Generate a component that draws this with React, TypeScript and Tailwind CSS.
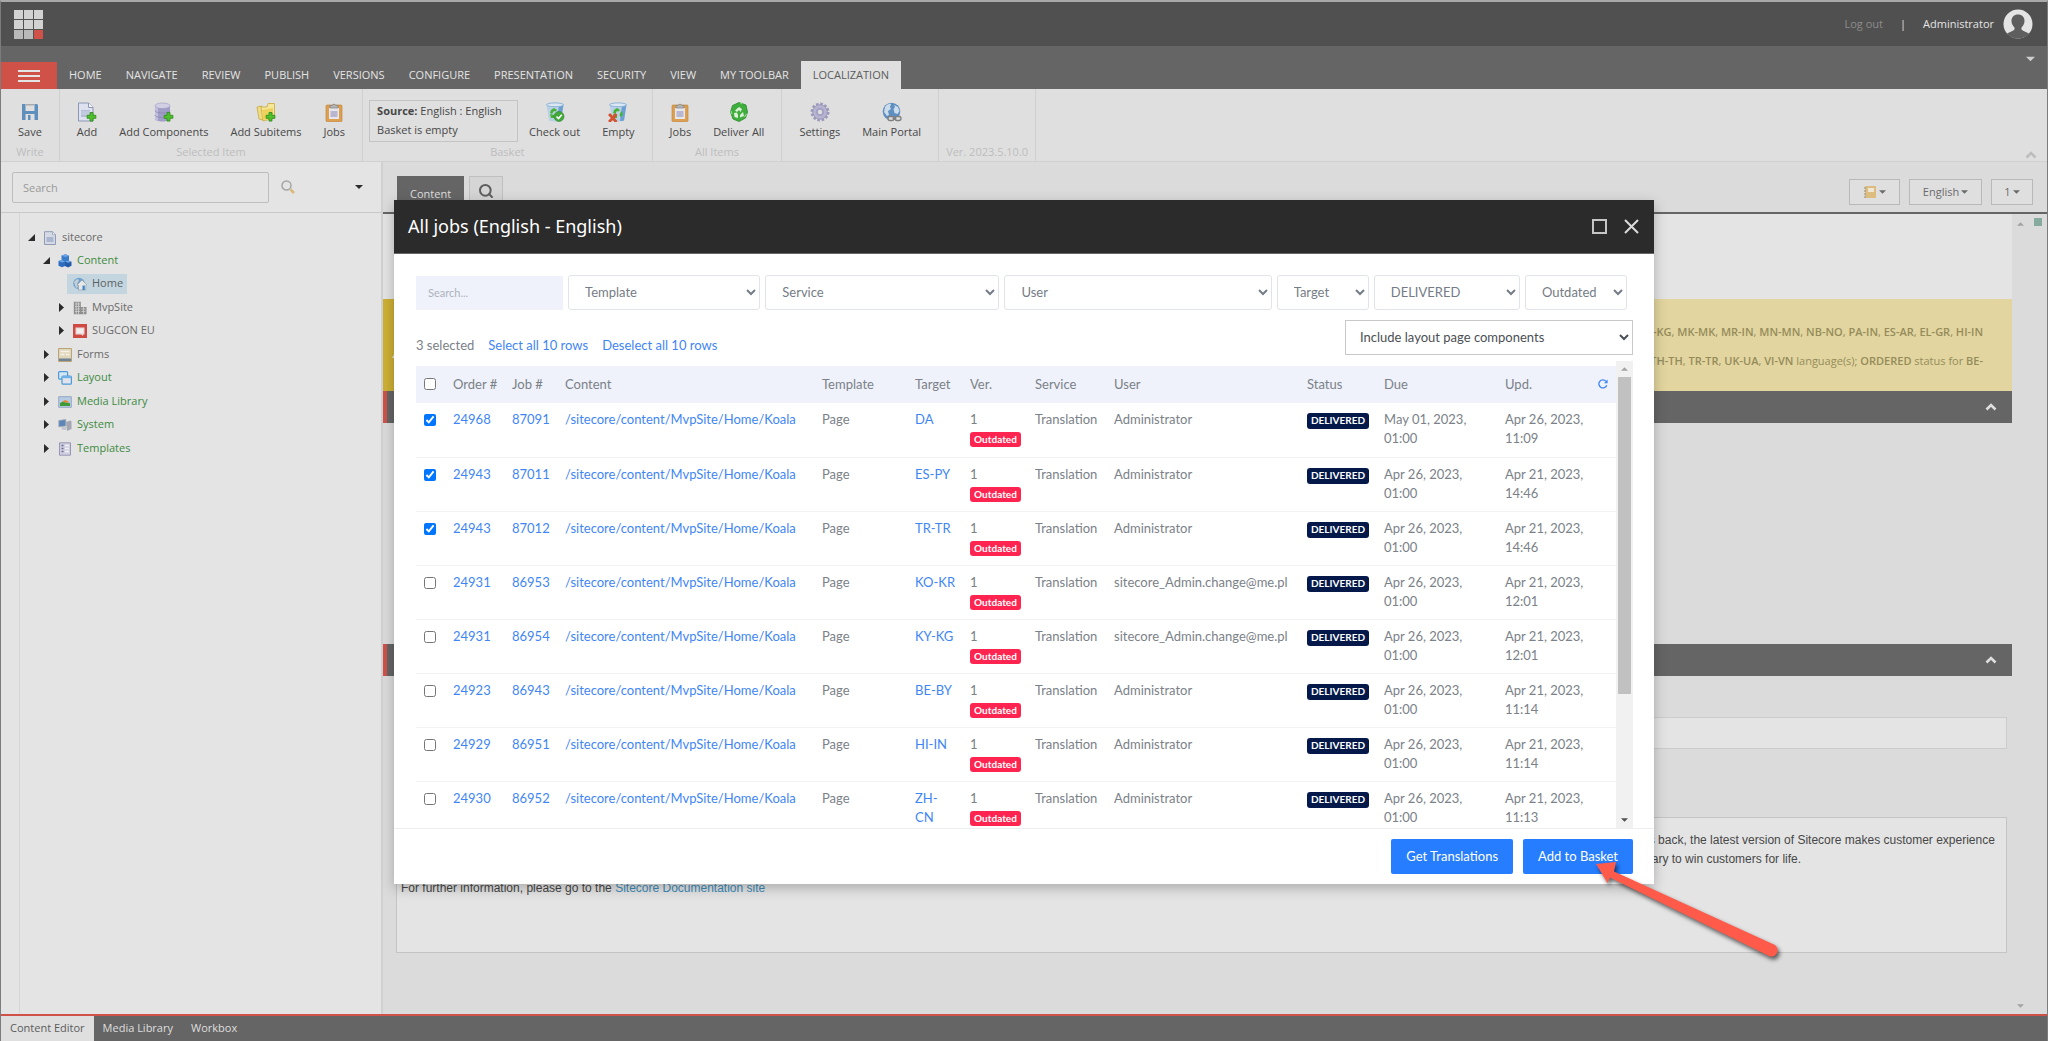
import { FC, ReactNode, useState } from "react";
import { Search } from "lucide-react";

interface Job {
  id: number;
  order: number;
  target: string;
  user: string;
  due: string;
  updated: string;
}

const tabs = ["HOME", "NAVIGATE", "REVIEW", "PUBLISH", "VERSIONS", "CONFIGURE", "PRESENTATION", "SECURITY", "VIEW", "MY TOOLBAR", "LOCALIZATION"];

const jobs: Job[] = [
  { order: 24968, id: 87091, target: "DA", user: "Administrator", due: "May 01, 2023, 01:00", updated: "Apr 26, 2023, 11:09" },
  { order: 24943, id: 87011, target: "ES-PY", user: "Administrator", due: "Apr 26, 2023, 01:00", updated: "Apr 21, 2023, 14:46" },
  { order: 24943, id: 87012, target: "TR-TR", user: "Administrator", due: "Apr 26, 2023, 01:00", updated: "Apr 21, 2023, 14:46" },
  { order: 24931, id: 86953, target: "KO-KR", user: "sitecore_Admin.change@me.pl", due: "Apr 26, 2023, 01:00", updated: "Apr 21, 2023, 12:01" },
  { order: 24931, id: 86954, target: "KY-KG", user: "sitecore_Admin.change@me.pl", due: "Apr 26, 2023, 01:00", updated: "Apr 21, 2023, 12:01" },
  { order: 24923, id: 86943, target: "BE-BY", user: "Administrator", due: "Apr 26, 2023, 01:00", updated: "Apr 21, 2023, 11:14" },
  { order: 24929, id: 86951, target: "HI-IN", user: "Administrator", due: "Apr 26, 2023, 01:00", updated: "Apr 21, 2023, 11:14" },
  { order: 24930, id: 86952, target: "ZH-\nCN", user: "Administrator", due: "Apr 26, 2023, 01:00", updated: "Apr 21, 2023, 11:13" },
];

/* ---------- ribbon icons ---------- */

const Plus: FC = () => (
  <path d="M13 10.5h3v2.8h2.9v3H16v2.8h-3v-2.8h-2.9v-3H13z" fill="#4fc02c" stroke="#2c8a1a" strokeWidth="0.8" />
);

const SaveIcon: FC = () => (
  <svg viewBox="0 0 20 20" className="size-5">
    <path d="M2 2h15l1 1v15H2z" fill="#5f8fbd" />
    <path d="M5.5 2h9v7h-9z" fill="#dfdfdf" />
    <path d="M6 2h8v1.5H6z" fill="#a9a9a9" />
    <path d="M5.5 12h9v6h-9z" fill="#dfdfdf" />
    <path d="M8 13h2.5v5H8z" fill="#5f8fbd" />
  </svg>
);

const AddIcon: FC = () => (
  <svg viewBox="0 0 20 20" className="size-5">
    <path d="M1.5 1h10l4.500 4.500V19H1.500z" fill="#dde2ee" stroke="#8b97b3" />
    <path d="M11.500 1v4.500H16" fill="#f4f6fa" stroke="#8b97b3" />
    <path d="M4 8h9v7H4z" fill="#b3bdd6" />
    <path d="M4 10h9M4 12h9" stroke="#dde2ee" strokeWidth="0.7" />
    <Plus />
  </svg>
);

const ComponentsIcon: FC = () => (
  <svg viewBox="0 0 20 20" className="size-5">
    <path d="M1 4v13c0 1.500 3.500 2.500 7.500 2.500s7.500-1 7.500-2.500V4z" fill="#a09dc6" />
    <path d="M1 4v13c0 .8 1 1.500 3 2V5z" fill="#c1bfdd" />
    <ellipse cx="8.500" cy="3.800" rx="7.500" ry="2.800" fill="#d0cfe4" stroke="#9c99c2" strokeWidth="0.6" />
    <path d="M1 8.500c0 1.500 3.500 2.500 7.500 2.500s7.500-1 7.500-2.500M1 13c0 1.500 3.500 2.500 7.500 2.500" fill="none" stroke="#8986b4" strokeWidth="0.8" />
    <Plus />
  </svg>
);

const SubitemsIcon: FC = () => (
  <svg viewBox="0 0 20 20" className="size-5">
    <path d="M1 5l5-1 1 14-4-1z" fill="#efdc86" stroke="#c9a93c" strokeWidth="0.8" />
    <path d="M5 5h6l1-3.500h6.500V16L7 19z" fill="#f5e69a" stroke="#c9a93c" strokeWidth="0.8" />
    <path d="M6 8l11-2v10L7 18z" fill="#ecd15c" />
    <Plus />
  </svg>
);

const ClipboardIcon: FC = () => (
  <svg viewBox="0 0 20 20" className="size-5">
    <rect x="2" y="3" width="16" height="16.500" rx="1" fill="#dd9f50" stroke="#c07f2f" strokeWidth="0.6" />
    <path d="M5 6h10v11H5z" fill="#e6e6ee" />
    <path d="M6.500 9h7v6h-7z" fill="#b9b7cf" />
    <path d="M6 6V3.500h2.200a1.900 1.900 0 0 1 3.600 0H14V6z" fill="#b5b5b5" stroke="#7f7f7f" strokeWidth="0.7" />
  </svg>
);

const Bin: FC = () => (
  <>
    <path d="M1.500 2.500L4 18.500c3 1.300 9 1.300 12 0l2.500-16z" fill="#b9d0e6" />
    <path d="M14 3l-2 16c2 0 3-.2 4-.5L18.500 2.500z" fill="#6d9fd2" />
    <ellipse cx="10" cy="2.800" rx="8.500" ry="1.900" fill="#dbe8f3" stroke="#7ea9d3" strokeWidth="0.8" />
    <path d="M6 8l3-2 3 2-1.500 1.500L9 9l-2 3-2-1zM13 9l2 3-2 3-1.500-1.500zM5 12l4 1v3H6z" fill="#45b32f" />
  </>
);

const CheckoutIcon: FC = () => (
  <svg viewBox="0 0 20 20" className="size-5">
    <Bin />
    <circle cx="14" cy="14.500" r="5" fill="#41a83a" stroke="#2b8426" strokeWidth="0.6" />
    <path d="M11.500 14.500l2 2 3.300-3.800" fill="none" stroke="#fff" strokeWidth="1.600" />
  </svg>
);

const EmptyIcon: FC = () => (
  <svg viewBox="0 0 20 20" className="size-5">
    <Bin />
    <path d="M2 13l5.500 6M7.500 13L2 19" stroke="#d5512f" strokeWidth="2.800" strokeLinecap="square" />
  </svg>
);

const DeliverIcon: FC = () => (
  <svg viewBox="0 0 20 20" className="size-5">
    <path d="M10 .5l7 2.500 1.500 7-2 6L10 19.500 4 17 1.500 10 3.500 3.500z" fill="#3fae3c" stroke="#2a8a2c" strokeWidth="0.8" />
    <path d="M10 5l3 2-1.500 3L10 8 8 10 6 8.500zM14 10l1 4-4 1.500V13zM5 11l3-.5 1 2.500v3l-3.500-1z" fill="#dff0dc" />
    <path d="M13 2l-2-1.500M17.500 12l-2 3M3 12L2 9" stroke="#8fd987" strokeWidth="1.200" />
  </svg>
);

const SettingsIcon: FC = () => (
  <svg viewBox="0 0 20 20" className="size-5">
    <circle cx="10" cy="10" r="8" fill="none" stroke="#9c9abb" strokeWidth="3" strokeDasharray="2.500 1.690" />
    <circle cx="10" cy="10" r="7.300" fill="#b6b4d0" stroke="#8f8db2" strokeWidth="0.7" />
    <circle cx="10" cy="10" r="4" fill="#a3a1c4" />
    <circle cx="10" cy="10" r="2.200" fill="#dfdfdf" />
  </svg>
);

const PortalIcon: FC = () => (
  <svg viewBox="0 0 20 20" className="size-5">
    <circle cx="9.500" cy="9.500" r="8.800" fill="#5e8fc0" />
    <path d="M3 5c2-3 5-3.500 6-3l-1 3 1 2-3 2 1 4-2 1-3-4zM12 3l4 2 1.500 4-2 3-3-1-1-4 1.500-2z" fill="#cddceb" />
    <rect x="6" y="14.500" width="6" height="4" rx="2" fill="#dfdfdf" stroke="#7e7e7e" strokeWidth="1.300" />
    <rect x="13" y="14.500" width="6" height="4" rx="2" fill="#dfdfdf" stroke="#7e7e7e" strokeWidth="1.300" />
    <path d="M10.500 16.500h4" stroke="#7e7e7e" strokeWidth="1.300" />
  </svg>
);

/* ---------- tree icons ---------- */

const DocIcon: FC = () => (
  <svg viewBox="0 0 14 14" className="size-[14px]">
    <path d="M1.500.7h8l3 3v9.800h-11z" fill="#d5dae6" stroke="#8f9ab3" />
    <path d="M3.500 6h7v5h-7z" fill="#aab5cf" />
    <path d="M9.500.7v3h3" fill="#eef0f5" stroke="#8f9ab3" strokeWidth="0.7" />
  </svg>
);

const CubesIcon: FC = () => (
  <svg viewBox="0 0 14 14" className="size-[14px]">
    <path d="M3.500 1.500L7.500.3l3.500 1.500v5.400L7.500 9l-4-1.500z" fill="#3a7ccc" />
    <path d="M.5 7l3.500-1 3 1.500v4.500l-3 1.300-3.500-1.500z" fill="#2f6cc0" />
    <path d="M7 7.500l3.500-1 3 1.200v4L10 13.500 7 12z" fill="#245ba8" />
    <path d="M3.500 1.500L7.500.3l3.500 1.500L7.300 3zM.5 7L4 6l3 1.500-3 .9zM7 7.500l3.500-1 3 1.200-3.500 1z" fill="#6ea6e6" />
  </svg>
);

const HomeIcon: FC = () => (
  <svg viewBox="0 0 14 14" className="size-[14px]">
    <circle cx="6" cy="6.500" r="5.800" fill="#6fa3cf" />
    <path d="M1 5l3-3 2 1-2 4 1 3-2 1z" fill="#c7cfd6" />
    <path d="M4 8l5-5 4.800 5-1 .6V13H5.500V8.500z" fill="#e7e7e7" stroke="#8a97a3" strokeWidth="0.6" />
    <path d="M9.500 8.500h2.300V13H9.500z" fill="#3f87cc" />
  </svg>
);

const BuildingIcon: FC = () => (
  <svg viewBox="0 0 14 14" className="size-[14px]">
    <path d="M.8.8h7v12.400h-7zM7.800 6h5.700v7.200H7.800z" fill="#8e8e8e" />
    <path d="M2 3h5M2 5.500h5M2 8h5M2 10.500h5M8.500 8h4M8.500 10.500h4M3.200 1v12M5.500 1v12M10.500 6v7" stroke="#d0d0d0" strokeWidth="0.8" />
  </svg>
);

const SugconIcon: FC = () => (
  <svg viewBox="0 0 14 14" className="size-[14px]">
    <path d="M0 0h14v14H0z" fill="#cf4a43" />
    <path d="M2.500 3.500h9v7h-1.500v1.500l-1.800-1.500H2.500z" fill="#e9dcdb" />
    <path d="M4 5h6v4H4z" fill="#f3eeee" />
  </svg>
);

const FormsIcon: FC = () => (
  <svg viewBox="0 0 14 14" className="size-[14px]">
    <path d="M.5.5h13v13H.5z" fill="#e0d6bb" stroke="#b9a678" />
    <path d="M2.500 3.500h9M2.500 6.500h4M8 6.500h3.500" stroke="#f6f2e6" strokeWidth="1.500" />
    <path d="M1 10.500h12v2.500H1z" fill="#6f8394" />
  </svg>
);

const LayoutIcon: FC = () => (
  <svg viewBox="0 0 14 14" className="size-[14px]">
    <rect x=".6" y=".6" width="9" height="7.500" rx="1" fill="#d6e6f3" stroke="#4b9bd8" strokeWidth="1.200" />
    <rect x="4" y="5" width="9.400" height="8.200" rx="1" fill="#e3e3ec" stroke="#4b9bd8" strokeWidth="1.200" />
    <path d="M4 5h9.400v2.200H4z" fill="#6db1e6" />
  </svg>
);

const MediaIcon: FC = () => (
  <svg viewBox="0 0 14 14" className="size-[14px]">
    <path d="M.7 1.700h12.600v10.600H.7z" fill="#b7cbe4" stroke="#95a8c4" />
    <path d="M2 8l3-1.500 3 1 4 .5v3H2z" fill="#3f9b38" />
    <path d="M4.500 6.500L7 5l4 1.500L9 8z" fill="#e08a35" />
  </svg>
);

const SystemIcon: FC = () => (
  <svg viewBox="0 0 14 14" className="size-[14px]">
    <path d="M.8 2.500l7-1v6.500l-7 .8z" fill="#5c86b8" stroke="#9fa9b8" strokeWidth="0.8" />
    <path d="M8 4l4.500-1.500 1 1V11L9 13z" fill="#a4a6b2" />
    <path d="M3 9.500l5-.5v3l-4-.5z" fill="#c1c3cc" />
  </svg>
);

const TemplatesIcon: FC = () => (
  <svg viewBox="0 0 14 14" className="size-[14px]">
    <path d="M1.500.8h11v12.400h-11z" fill="#cfcfe0" stroke="#9796b5" />
    <path d="M3.500 3.500h2M3.500 6.500h2M3.500 9.500h2" stroke="#6d6b95" strokeWidth="1.300" />
    <path d="M7 3.500h4M7 6.500h4M7 9.500h4" stroke="#f0f0f6" strokeWidth="1.500" />
  </svg>
);

const Chevron: FC<{ className: string }> = ({ className }) => (
  <svg viewBox="0 0 12 8" className={className}>
    <path d="M1.500 6.500L6 2l4.500 4.500" fill="none" stroke="currentColor" strokeWidth="2.600" />
  </svg>
);

const Caret: FC<{ className: string }> = ({ className }) => (
  <svg viewBox="0 0 8 4" className={className}>
    <path d="M0 0h8L4 4z" fill="currentColor" />
  </svg>
);

/* ---------- ribbon ---------- */

const RibbonGroup: FC<{ label?: string; children?: ReactNode }> = ({ label, children }) => (
  <div className="flex flex-col border-r border-[#d0d0d0] px-[6px] pt-[11px]">
    <div className="flex h-[45px] items-start">{children}</div>
    <div className="px-px text-center leading-[18px] text-[#bdbdbd]">{label}</div>
  </div>
);

const RibbonButton: FC<{ label: string; icon: ReactNode }> = ({ label, icon }) => (
  <button className="flex flex-col items-center px-[11px] pt-[2px]">
    {icon}
    <span className="whitespace-nowrap leading-[19px] text-[#474747]">{label}</span>
  </button>
);

/* ---------- content tree ---------- */

interface NodeProps {
  label: string;
  icon: ReactNode;
  state?: "open" | "closed";
  green?: boolean;
  active?: boolean;
  children?: ReactNode;
}

const TreeNode: FC<NodeProps> = ({ label, icon, state, green, active, children }) => (
  <li className="even:mt-px">
    <div className="flex h-[23px] items-center">
      <button aria-label={"Toggle " + label} className="flex w-[12px] shrink-0 items-center justify-center text-[#2b2b2b]">
        {state === "open" && <svg viewBox="0 0 7 7" className="size-[7px]"><path d="M7 0v7H0z" fill="currentColor" /></svg>}
        {state === "closed" && <svg viewBox="0 0 5 9" className="h-[9px] w-[5px]"><path d="M0 0v9l5-4.500z" fill="currentColor" /></svg>}
      </button>
      <a href="#" className={"flex h-5 items-center gap-[5px] pl-[6px] pr-1 " + (active ? "bg-[#c3d6df] text-[#5b6063]" : green ? "text-[#3d8b41]" : "text-[#6a6a6a]")}>
        {icon}
        <span>{label}</span>
      </a>
    </div>
    {children && <ul className="pl-[15px]">{children}</ul>}
  </li>
);

/* ---------- editor ---------- */

const SectionBar: FC<{ label: string }> = ({ label }) => (
  <div className="flex h-8 shrink-0 items-center justify-end border-l-4 border-[#cf5148] bg-[#656565] pr-[15px] text-[#dfdfdf]">
    <button aria-label={label}><Chevron className="h-[8px] w-[12px]" /></button>
  </div>
);

const smallButton = "flex h-[26px] items-center justify-center border border-[#b9b9b9] bg-[#dfdfdf] text-[#6b6b6b]";

const Editor: FC = () => (
  <main className="flex min-w-0 flex-1 flex-col border-l-2 border-[#d0d0d0] bg-[#dbdbdb]">
    <div className="flex h-[52px] shrink-0 items-start justify-between border-b-2 border-[#656565] pl-[14px] pr-[14px] pt-[14px]">
      <div className="flex gap-[5px]">
        <button className="h-[36px] bg-[#656565] px-[13px] text-[#dfdfdf]">Content</button>
        <button aria-label="Search item" className="flex h-[36px] w-[34px] items-start justify-center border border-[#c0c0c0] bg-[#d5d5d5] pt-[6px] text-[#5e5e5e]">
          <Search className="size-4" strokeWidth={3} />
        </button>
      </div>
      <div className="flex gap-[9px] pt-[3px]">
        <button aria-label="Switch view" className={smallButton + " w-[51px] gap-[3px]"}>
          <svg viewBox="0 0 12 12" className="size-3">
            <path d="M1 0h11v12H1z" fill="#dcbd7f" />
            <path d="M4 2h6v4H4z" fill="#efe7d5" />
            <path d="M0 2h2M0 5h2M0 8h2M0 11h2" stroke="#8b8b8b" />
          </svg>
          <Caret className="h-1 w-[7px]" />
        </button>
        <button className={smallButton + " w-[73px] gap-[2px]"}>English<Caret className="h-1 w-[7px]" /></button>
        <button className={smallButton + " w-[42px] gap-[2px]"}>1<Caret className="h-1 w-[7px]" /></button>
      </div>
    </div>

    <div className="flex min-h-0 flex-1">
      <div className="flex min-w-0 flex-1 flex-col">
        <div className="h-[85px] shrink-0 bg-[#e4e4e4]" />
        <div className="flex h-[92px] shrink-0 bg-[#e2d59f] text-[#958c5b]">
          <div className="flex w-12 items-center justify-center bg-[#ceb035]">
            <svg viewBox="0 0 32 28" className="h-7 w-8"><path d="M16 1l15 26H1z" fill="#e4e4e4" /><path d="M16 10v9M16 21v3" stroke="#ceb035" strokeWidth="3" /></svg>
          </div>
          <div className="flex-1 pr-[29px] pt-[18px] text-right leading-[29px]">
            <p><b className="font-semibold">KY-KG</b>, <b className="font-semibold">MK-MK</b>, <b className="font-semibold">MR-IN</b>, <b className="font-semibold">MN-MN</b>, <b className="font-semibold">NB-NO</b>, <b className="font-semibold">PA-IN</b>, <b className="font-semibold">ES-AR</b>, <b className="font-semibold">EL-GR</b>, <b className="font-semibold">HI-IN</b></p>
            <p><b className="font-semibold">TH-TH</b>, <b className="font-semibold">TR-TR</b>, <b className="font-semibold">UK-UA</b>, <b className="font-semibold">VI-VN</b> language(s); <b className="font-semibold">ORDERED</b> status for <b className="font-semibold">BE-</b></p>
          </div>
        </div>
        <SectionBar label="Collapse quick info" />
        <div className="h-[221px] shrink-0" />
        <SectionBar label="Collapse content" />
        <div className="pl-[13px] pr-[5px] pt-[41px]">
          <input aria-label="Title" className="block h-8 w-full border border-[#cccccc] bg-[#e4e4e4]" />
          <div className="mt-[68px] h-[136px] border border-[#c4c4c4] bg-[#e4e4e4] pl-1 pt-[13px] font-['Liberation_Sans',sans-serif] text-[12px] leading-[19px] text-[#474747]">
            <p>From a single connected platform that also integrates with customer-facing platforms, to a single view of the customer in a big data marketing repository, to completely eliminating much of the complexity that has previously held marketers back, the latest version of Sitecore makes customer experience highly achievable. Learn how the latest version of Sitecore gives marketers complete data, integrated tools, and automation capabilities to engage customers throughout an iterative lifecycle – the technology foundation absolutely necessary to win customers for life.</p>
            <p className="mt-[10px]">For further information, please go to the <a href="#" className="text-[#3f8cb9]">Sitecore Documentation site</a></p>
          </div>
        </div>
      </div>
      <div className="flex w-[35px] justify-between px-[5px] pb-[6px] pt-[4px] text-[#a3a3a3]">
        <div className="flex flex-col justify-between pt-[4px]">
          <Caret className="h-1 w-[7px] rotate-180" />
          <Caret className="h-1 w-[7px]" />
        </div>
        <span className="size-[8px] bg-[#86aa9e]" />
      </div>
    </div>
  </main>
);

/* ---------- jobs dialog ---------- */

const filterSelect = "h-[35px] w-full min-w-0 rounded-[3px] border border-[#e0e4ea] bg-white pb-px pl-3 text-[13px] text-[#757c86]";

const Filter: FC<{ label: string; value: string }> = ({ label, value }) => (
  <select aria-label={label} className={filterSelect}>
    <option>{value}</option>
  </select>
);

const JobsDialog: FC = () => {
  const [selected, setSelected] = useState<number[]>([87091, 87011, 87012]);

  const toggle = (id: number) => {
    setSelected(prev => (prev.includes(id) ? prev.filter(x => x !== id) : [...prev, id]));
  };

  return (
    <div role="dialog" aria-label="All jobs" className="w-[1260px] bg-white font-['Lato',sans-serif] text-[13px] text-[#7b8188] shadow-[0_4px_12px_rgba(0,0,0,0.25)]">
      <div className="flex h-[54px] items-center justify-between border-b border-[#666] bg-[#2b2b2b] pl-[14px] pr-[15px] text-white">
        <h1 className="font-['Noto_Sans',sans-serif] text-[18px]">All jobs (English - English)</h1>
        <div className="flex items-center gap-[17px] text-[#dcdcdc]">
          <button aria-label="Maximize" className="size-[15px] border-2 border-[#c6c6c6]" />
          <button aria-label="Close">
            <svg viewBox="0 0 15 15" className="size-[15px]"><path d="M1 1l13 13M14 1L1 14" stroke="currentColor" strokeWidth="2" /></svg>
          </button>
        </div>
      </div>

      <div className="pl-[22px] pr-[21px] pt-[21px]">
        <div className="mr-[6px] grid grid-cols-[147fr_192fr_234fr_267fr_92fr_146fr_102fr] items-end gap-[5px]">
          <input aria-label="Search" placeholder="Search..." className="h-[34px] w-full min-w-0 bg-[#eff2fa] px-3 pb-px text-[11px] placeholder:text-[#adb3bc]" />
          <Filter label="Template" value="Template" />
          <Filter label="Service" value="Service" />
          <Filter label="User" value="User" />
          <Filter label="Target" value="Target" />
          <Filter label="Status" value="DELIVERED" />
          <Filter label="Version" value="Outdated" />
        </div>

        <div className="mt-[10px] flex items-end justify-between">
          <div className="flex gap-[14px] pb-px leading-[18px]">
            <span>{selected.length} selected</span>
            <button className="text-[#3f86f5]">Select all 10 rows</button>
            <button className="text-[#3f86f5]">Deselect all 10 rows</button>
          </div>
          <select aria-label="Layout components" className="h-[35px] w-[288px] border border-[#c9c9c9] bg-white pb-px pl-[10px] text-[13px] text-[#4b4f54]">
            <option>Include layout page components</option>
          </select>
        </div>

        <div className="mt-[6px] flex h-[467px]">
          <div className="min-w-0 flex-1 overflow-hidden pt-[5px]">
            <table className="w-full table-fixed border-collapse text-left leading-[19px]">
              <colgroup>
                <col className="w-[29px]" />
                <col className="w-[59px]" />
                <col className="w-[53px]" />
                <col />
                <col className="w-[93px]" />
                <col className="w-[55px]" />
                <col className="w-[65px]" />
                <col className="w-[79px]" />
                <col className="w-[193px]" />
                <col className="w-[77px]" />
                <col className="w-[121px]" />
                <col className="w-[119px]" />
              </colgroup>
              <thead>
                <tr className="h-[37px] bg-[#eff2fa] [&>th]:whitespace-nowrap [&>th]:px-2 [&>th]:pb-px [&>th]:font-normal">
                  <th><input type="checkbox" aria-label="Select all" className="block size-3" /></th>
                  <th>Order #</th>
                  <th>Job #</th>
                  <th>Content</th>
                  <th>Template</th>
                  <th>Target</th>
                  <th>Ver.</th>
                  <th>Service</th>
                  <th>User</th>
                  <th>Status</th>
                  <th>Due</th>
                  <th>
                    <div className="flex items-center justify-between">
                      Upd.
                      <button aria-label="Refresh" className="text-[#3f86f5]">
                        <svg viewBox="0 0 10 10" className="size-[10px]">
                          <path d="M8.700 6.200A4 4 0 1 1 7.900 2.300" fill="none" stroke="currentColor" strokeWidth="1.300" />
                          <path d="M9.600.5v3.700H6z" fill="currentColor" />
                        </svg>
                      </button>
                    </div>
                  </th>
                </tr>
              </thead>
              <tbody>
                {jobs.map(job => (
                  <tr key={job.id} className="h-[54px] border-b border-[#f1f2f4] align-top [&>td]:px-2 [&>td]:pt-[7px]">
                    <td>
                      <input type="checkbox" aria-label={"Job " + job.id} checked={selected.includes(job.id)} onChange={() => toggle(job.id)} className="mt-1 block size-3" />
                    </td>
                    <td><a href="#" className="text-[#3f86f5]">{job.order}</a></td>
                    <td><a href="#" className="text-[#3f86f5]">{job.id}</a></td>
                    <td><a href="#" className="text-[#3f86f5]">/sitecore/content/MvpSite/Home/Koala</a></td>
                    <td>Page</td>
                    <td className="whitespace-pre"><a href="#" className="text-[#3f86f5]">{job.target}</a></td>
                    <td>
                      1
                      <span className="mt-[3px] block h-[15px] w-[51px] rounded-[3px] bg-[#ff2550] text-center text-[10px] font-bold leading-[14px] text-white">Outdated</span>
                    </td>
                    <td>Translation</td>
                    <td className="whitespace-nowrap">{job.user}</td>
                    <td>
                      <span className="mt-[3px] block h-[16px] w-[62px] rounded-[3px] bg-[#04184a] text-center text-[10px] font-bold leading-[15px] text-white">DELIVERED</span>
                    </td>
                    <td>{job.due}</td>
                    <td>{job.updated}</td>
                  </tr>
                ))}
              </tbody>
            </table>
          </div>
          <div className="flex w-[17px] shrink-0 flex-col items-center bg-[#f1f1f1] py-[6px]">
            <Caret className="h-1 w-[7px] rotate-180 text-[#a3a3a3]" />
            <div className="mt-[6px] h-[317px] w-[13px] bg-[#c1c1c1]" />
            <Caret className="mt-auto h-1 w-[7px] text-[#505050]" />
          </div>
        </div>
      </div>

      <div className="flex h-[56px] items-start justify-end gap-[10px] border-t border-[#eceef2] pr-[21px] pt-[10px] text-white">
        <button className="h-[35px] rounded-[2px] bg-[#267dff] px-[15px]">Get Translations</button>
        <button className="h-[35px] rounded-[2px] bg-[#267dff] px-[15px]">Add to Basket</button>
      </div>
    </div>
  );
};

const App: FC = () => (
  <div className="relative flex h-screen flex-col overflow-hidden border-x border-t-2 border-x-[#7c7c7c] border-t-[#a9a9a9] bg-[#dbdbdb] font-['Open_Sans',sans-serif] text-[11px]">
    <header className="flex h-[44px] shrink-0 items-center justify-between bg-[#505050] pl-[13px] pr-[14px]">
      <svg viewBox="0 0 29 29" className="size-[29px]">
        {[0, 10, 20].map(y => [0, 10, 20].map(x => (
          <rect key={x + "-" + y} x={x} y={y} width="9" height="9" fill={x === 20 && y === 20 ? "#cf5148" : y === 20 ? "#b9b9b9" : "#d2d2d2"} />
        )))}
      </svg>
      <div className="flex items-center text-[#e4e4e4]">
        <a href="#" className="text-[#8c8c8c]">Log out</a>
        <span className="px-[17px]">|</span>
        <span>Administrator</span>
        <svg viewBox="0 0 30 30" className="ml-[9px] size-[30px]">
          <circle cx="15" cy="15" r="14.500" fill="#e4e4e4" />
          <path d="M15 5.500c4 0 6.500 2.500 6.500 6.500 0 3-1.500 5-3 6.500v2c1 1.500 5 2.500 7.500 4-2.500 3.200-6.500 5-11 5s-8.500-1.800-11-5c2.500-1.500 6.500-2.500 7.500-4v-2c-1.500-1.500-3-3.500-3-6.500 0-4 2.500-6.500 6.500-6.500z" fill="#5e5e5e" />
        </svg>
      </div>
    </header>

    <nav className="flex h-[43px] shrink-0 items-end bg-[#656565] text-[#e4e4e4]">
      <button aria-label="Menu" className="flex h-[27px] w-[56px] flex-col items-center justify-center gap-[3px] bg-[#cf5148]">
        <span className="h-[2px] w-[22px] bg-[#e4e4e4]" />
        <span className="h-[2px] w-[22px] bg-[#e4e4e4]" />
        <span className="h-[2px] w-[22px] bg-[#e4e4e4]" />
      </button>
      {tabs.map(tab => (
        <button key={tab} className={"h-[28px] px-3 " + (tab === "LOCALIZATION" ? "bg-[#dfdfdf] text-[#5b5b5b]" : "")}>{tab}</button>
      ))}
      <button aria-label="More" className="mb-[27px] ml-auto mr-[12px]"><Caret className="h-[6px] w-[9px] text-[#cfcfcf]" /></button>
    </nav>

    <section className="flex h-[73px] shrink-0 border-b border-[#d0d0d0] bg-[#dfdfdf]">
      <RibbonGroup label="Write">
        <RibbonButton label="Save" icon={<SaveIcon />} />
      </RibbonGroup>
      <RibbonGroup label="Selected Item">
        <RibbonButton label="Add" icon={<AddIcon />} />
        <RibbonButton label="Add Components" icon={<ComponentsIcon />} />
        <RibbonButton label="Add Subitems" icon={<SubitemsIcon />} />
        <RibbonButton label="Jobs" icon={<ClipboardIcon />} />
      </RibbonGroup>
      <RibbonGroup label="Basket">
        <div className="h-[42px] w-[149px] border border-[#c4c4c4] pl-[7px] leading-[19px] text-[#474747]">
          <p><b>Source:</b> English : English</p>
          <p>Basket is empty</p>
        </div>
        <RibbonButton label="Check out" icon={<CheckoutIcon />} />
        <RibbonButton label="Empty" icon={<EmptyIcon />} />
      </RibbonGroup>
      <RibbonGroup label="All Items">
        <RibbonButton label="Jobs" icon={<ClipboardIcon />} />
        <RibbonButton label="Deliver All" icon={<DeliverIcon />} />
      </RibbonGroup>
      <RibbonGroup>
        <RibbonButton label="Settings" icon={<SettingsIcon />} />
        <RibbonButton label="Main Portal" icon={<PortalIcon />} />
      </RibbonGroup>
      <RibbonGroup label="Ver. 2023.5.10.0" />
      <button aria-label="Collapse ribbon" className="mb-[2px] ml-auto mr-[10px] self-end"><Chevron className="h-[8px] w-[12px] text-[#bdbdbd]" /></button>
    </section>

    <div className="flex min-h-0 flex-1">
      <aside className="flex w-[380px] shrink-0 flex-col bg-[#e4e4e4]">
        <div className="flex h-[51px] shrink-0 items-center border-b border-[#c9c9c9] pl-[11px] pr-[18px]">
          <input aria-label="Search tree" placeholder="Search" className="h-[31px] w-[257px] rounded-[2px] border border-[#bdbdbd] px-[10px] placeholder:text-[#9a9a9a]" />
          <button aria-label="Search" className="ml-[12px]">
            <svg viewBox="0 0 14 14" className="size-[14px]">
              <circle cx="5.500" cy="5.500" r="4.500" fill="none" stroke="#a5a5a5" strokeWidth="1.500" />
              <path d="M9.500 9.500l3.500 3.500" stroke="#dcb877" strokeWidth="2.500" />
            </svg>
          </button>
          <button aria-label="Search options" className="ml-auto"><Caret className="h-1 w-[8px] text-[#2b2b2b]" /></button>
        </div>
        <div className="ml-[18px] flex-1 border-l border-[#d6d6d6] pl-[5px] pt-[13px]">
          <ul>
            <TreeNode label="sitecore" state="open" icon={<DocIcon />}>
              <TreeNode label="Content" state="open" green icon={<CubesIcon />}>
                <TreeNode label="Home" active icon={<HomeIcon />} />
                <TreeNode label="MvpSite" state="closed" icon={<BuildingIcon />} />
                <TreeNode label="SUGCON EU" state="closed" icon={<SugconIcon />} />
              </TreeNode>
              <TreeNode label="Forms" state="closed" icon={<FormsIcon />} />
              <TreeNode label="Layout" state="closed" green icon={<LayoutIcon />} />
              <TreeNode label="Media Library" state="closed" green icon={<MediaIcon />} />
              <TreeNode label="System" state="closed" green icon={<SystemIcon />} />
              <TreeNode label="Templates" state="closed" green icon={<TemplatesIcon />} />
            </TreeNode>
          </ul>
        </div>
      </aside>
      <Editor />
    </div>

    <footer className="flex h-[27px] shrink-0 border-t-2 border-[#cf5148] bg-[#656565] text-[#dfdfdf]">
      <button className="bg-[#dfdfdf] px-[9px] text-[#5b5b5b]">Content Editor</button>
      <button className="px-[9px]">Media Library</button>
      <button className="px-[9px]">Workbox</button>
    </footer>

    <div className="absolute inset-x-0 top-[198px] flex justify-center">
      <JobsDialog />
    </div>

    {/* pointer towards the basket button */}
    <svg viewBox="0 0 200 110" className="absolute left-[1590px] top-[852px] h-[110px] w-[200px] drop-shadow-[2px_3px_2px_rgba(0,0,0,0.6)]">
      <path d="M5 10l20-2-2 9.500L184 91q4 3 2 8-3 5-8 3L19 23.500 16.500 29z" fill="#ff5a4a" />
    </svg>
  </div>
);

export default App;
